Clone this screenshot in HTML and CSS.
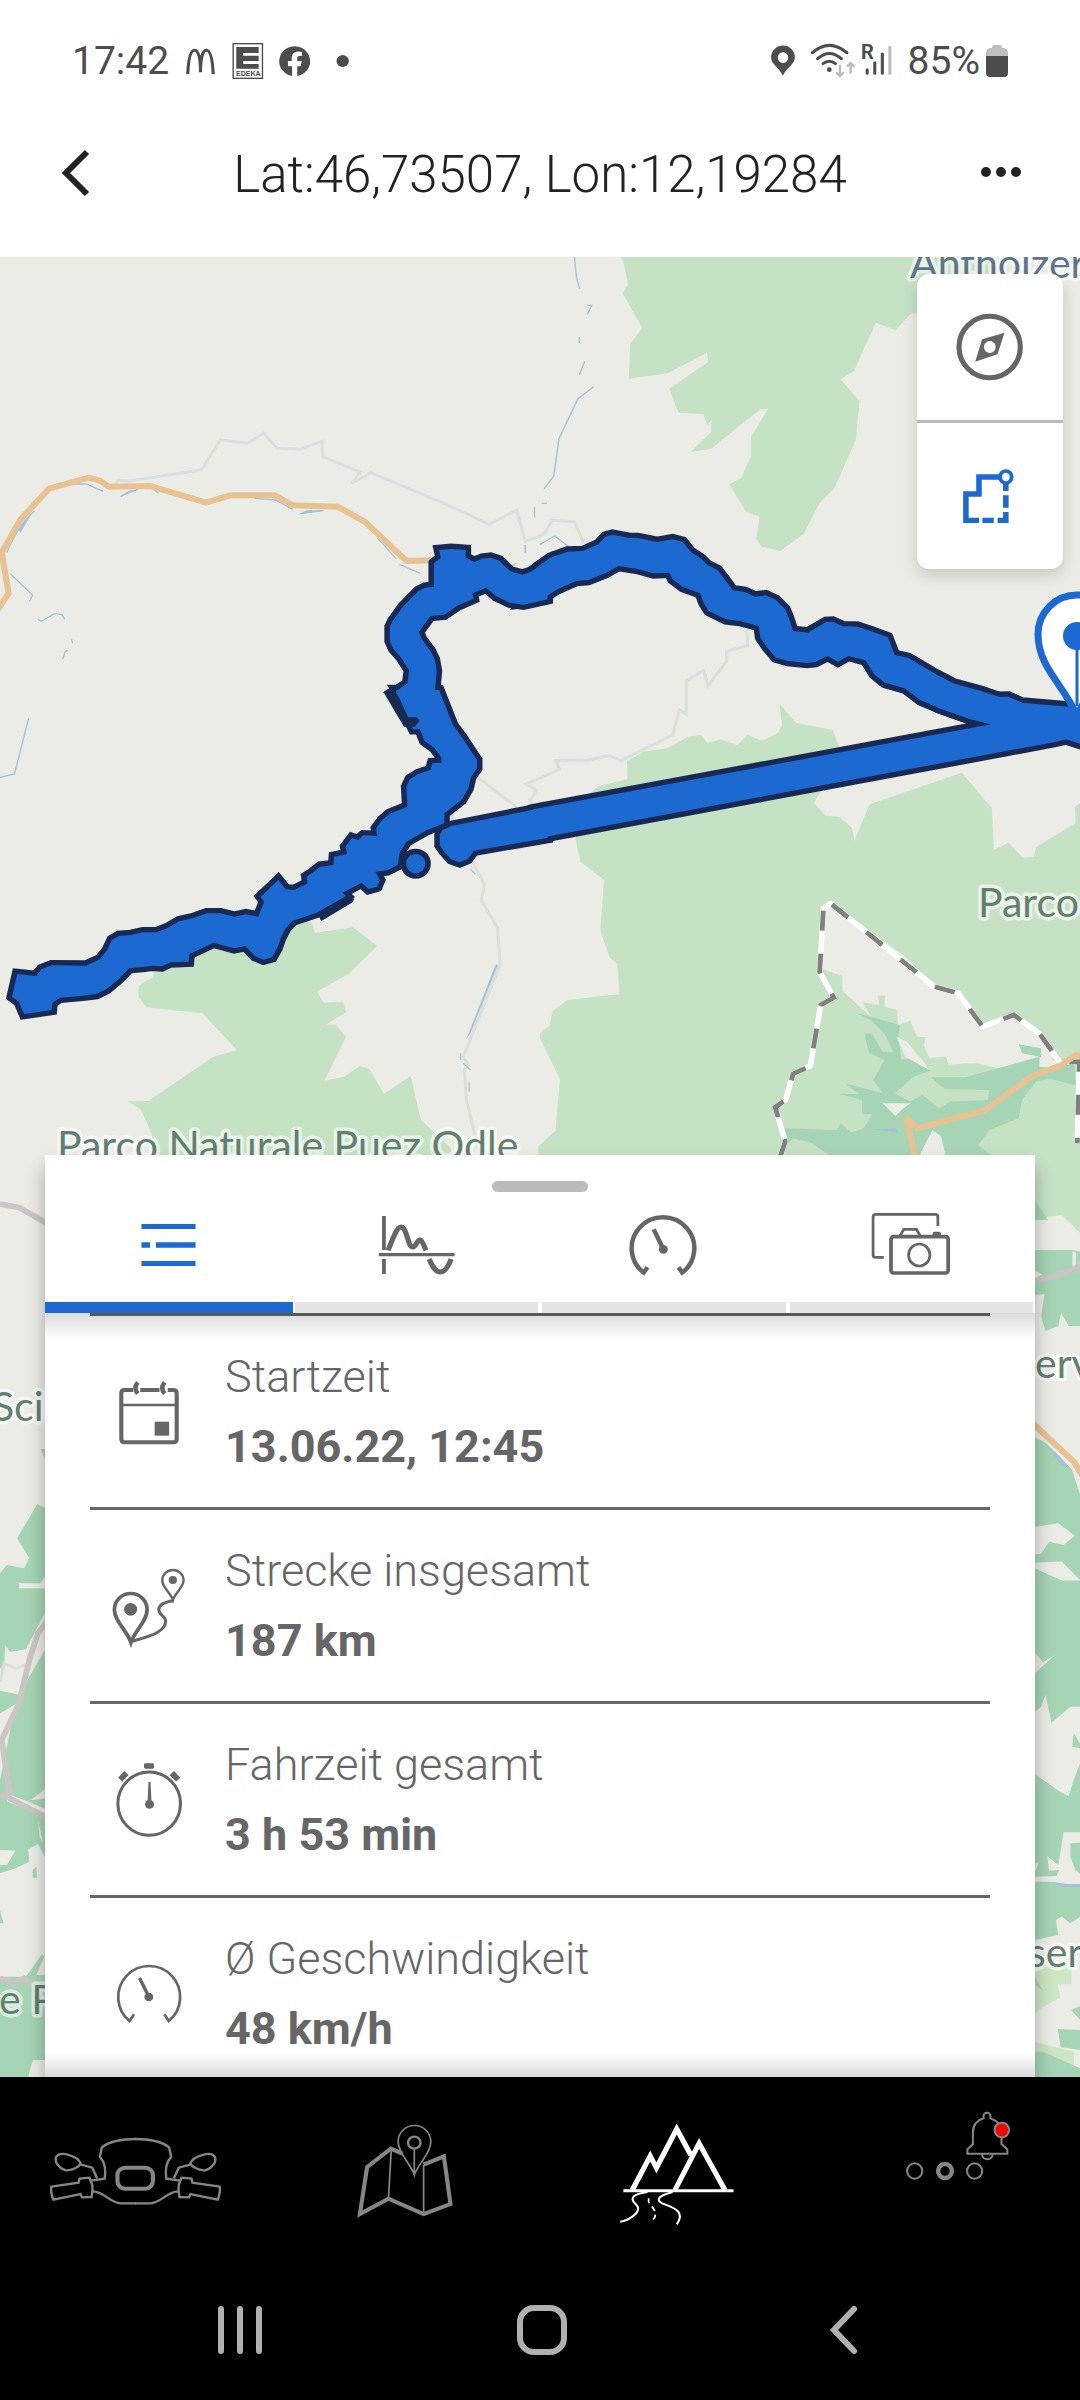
FILE: index.html
```html
<!DOCTYPE html>
<html lang="de">
<head>
<meta charset="utf-8">
<meta name="viewport" content="width=device-width, initial-scale=1">
<title>Tour</title>
<link rel="stylesheet" href="styles.css">
</head>
<body>
<div class="status">
  <span class="status-text">17:42</span>
  <svg class="status-left" viewBox="179 31 176 60" aria-hidden="true">
    <g transform="scale(.3444 .3333)" fill="#4d4d4d">
      <path d="M548 222C550 180 555 151 567 151C580 151 585 180 585 217C585 180 590 151 602 151C615 151 620 180 622 222" fill="none" stroke="#4d4d4d" stroke-width="9"/>
      <rect x="680" y="131" width="85" height="104" fill="none" stroke="#4d4d4d" stroke-width="4"/>
      <path d="M689 141H754V159H709V167H754V183H709V192H754V206H689Z"/>
      <path fill-rule="evenodd" d="M851 228A45 45 0 1 1 866 228V199H876L879 183H866V175Q866 168 874 168H880V156Q850 150 850 174V183H839V199H851Z"/>
      <ellipse cx="998" cy="183" rx="18" ry="18"/>
    </g>
    <text class="tiny" x="237" y="76">EDEKA</text>
  </svg>
  <svg class="status-right" viewBox="771 31 123 60" aria-hidden="true">
    <g transform="translate(540 0) scale(.3444 .3333)" fill="#4d4d4d">
      <path fill-rule="evenodd" d="M705 227C694 203 671 193 671 172A34 35 0 0 1 740 172C740 193 717 203 705 227ZM705 157A15 16 0 1 0 706 157Z"/>
      <g fill="none" stroke="#4d4d4d" stroke-width="9" stroke-linecap="round">
        <path d="M791 158Q840 114 891 158M806 176Q840 145 875 176M822 191Q840 177 858 191"/>
        <path d="M950 209V220M972 188V220M994 162V220"/>
        <path d="M1016 142V220" stroke="#bcbcbc"/>
        <path d="M871 198V227M862 219L871 228L880 219M902 218V189M893 198L902 189L911 198" stroke="#bcbcbc" stroke-width="7"/>
      </g>
      <circle cx="840" cy="209" r="7"/>
    </g>
    <text class="roam" x="861" y="59">R</text>
  </svg>
  <span class="status-text">85%</span>
  <svg class="battery" viewBox="0 0 22 32" aria-hidden="true">
    <path d="M6 3Q6 0 8 0H14Q16 0 16 3H18Q22 4 22 8V12H0V8Q0 4 4 3Z" fill="#bfbfbf"/>
    <path d="M0 11H22V28Q22 32 18 32H4Q0 32 0 28Z" fill="#4d4d4d"/>
  </svg>
</div>

<header class="topbar">
  <button class="icon-btn" aria-label="Zurück"><svg viewBox="0 0 150 100"><path d="M87 27L66 48L87 69" fill="none" stroke="#222" stroke-width="6"/></svg></button>
  <h1>Lat:46,73507, Lon:12,19284</h1>
  <button class="icon-btn" aria-label="Mehr"><svg viewBox="0 0 150 100" fill="#222"><circle cx="56" cy="47" r="5"/><circle cx="71" cy="47" r="5"/><circle cx="86" cy="47" r="5"/></svg></button>
</header>

<main class="map">
  <svg class="map-canvas" viewBox="0 257 1080 1820" preserveAspectRatio="xMidYMin slice" role="img" aria-label="Karte">
    <!-- north east woods -->
    <g transform="translate(540 256) scale(.3444 .3333)">
      <path class="wood" d="M230 0L242 15L256 85L240 112L297 215L262 265L258 368L370 352L485 290L488 318L375 398L402 470L475 475L485 507L497 493V528L438 587L495 580L640 459H662L613 543V600L585 665L550 685L598 767L638 782L628 848L643 872L698 885L765 835L812 740L855 695L917 552L928 436L873 370L912 345L975 200L1033 223L1075 175L1120 165L1300 60L1330 0Z"/>
      <path class="water" d="M100 3L106 65L115 98M137 148H150L138 175M114 243V262M130 316L114 356M156 392L110 428L55 548L40 660L12 698M5 742H20M0 865L43 840L83 872"/>
      <path class="lane" d="M0 840L12 835L35 792L100 798L127 862M425 1370V1275L475 1243L488 1290L542 1215V1187L603 1168L600 1120"/>
    </g>
    <!-- north west roads -->
    <g transform="translate(0 256) scale(.3444 .3333)">
      <path class="lane" d="M335 680L345 673L375 675L585 642L640 552L718 562L765 532L805 577L872 580L935 556L937 602L1045 648L1022 682L1077 650L1290 742L1420 805L1500 763L1525 855L1570 840"/>
      <path class="water" d="M20 890Q50 810 100 765M208 684H250L300 706M440 695L460 712M350 722L375 708L400 700M740 727L800 732L850 760M870 773L940 764M1095 845L1150 908M1160 925L1220 952M30 953L95 1018L85 1037M110 1090L120 1096L158 1073L180 1076L188 1090M208 1150L211 1162M182 1210L190 1186L197 1184M1552 785V752M1525 867V890M1485 930L1500 922"/>
      <path class="water-fill" d="M350 722L375 704L405 700ZM868 775L890 763L943 763ZM50 820L75 790L95 767L60 830Z"/>
      <path class="road" d="M-10 1066L25 1012L5 890L60 790L142 698L257 665L290 674L315 692L435 690L598 740L668 718H798L850 748L980 752L1060 798L1180 915L1270 912"/>
    </g>
    <!-- Puez Odle -->
    <g transform="translate(0 700) scale(.3444 .3333)">
      <path class="wood" d="M905 668L915 698L1025 682L1095 738L1015 820L920 875L940 908L997 905L1005 937L947 974H975L1005 1010L942 1142L1000 1130L1045 1097L1073 1108L1115 1182L1192 1127L1222 1260L1310 1345V1400H465L440 1300L408 1228L370 1203H430L620 1070L688 1050L588 940L425 922L402 890V858L445 830L450 790L600 720L850 660Z"/>
      <path class="lane" d="M1385 230L1500 322M1375 490L1407 555L1397 600L1445 685L1452 795L1345 1070L1360 1095L1348 1110L1355 1205L1392 1360M1570 233L1528 252L1558 272L1540 300L1548 320M1300 330L1320 360"/>
      <path class="water" d="M83 55L42 222L0 232M1366 507L1380 522M1337 1060V1080M1345 1090L1366 1110M1362 1147V1175M1415 1358L1425 1366"/>
      <path class="water-fill" d="M1440 792L1446 795L1366 1000L1353 1020Z"/>
    </g>
    <!-- Fanes and the Cortina side -->
    <g transform="translate(540 700) scale(.3444 .3333)">
      <path class="wood" d="M145 280L170 258L253 238V183L300 155L370 145L430 110L468 105L487 129L525 118L573 135L603 105L645 122L690 100L703 75L695 10L742 68L850 90L868 138V210L812 280L795 308L828 347L868 350L906 383L913 423L957 313L1225 218L1312 325L1318 450L1360 428L1402 473L1432 470L1442 440L1555 370L1553 320L1570 308V1620H1400L700 1400H-5V1340L45 1292L58 1138L0 1015V1000L28 977L37 932L80 900L230 882L225 793L202 772L175 690L186 540L117 485L103 415Z"/>
      <path class="land" d="M823 625L843 608L1055 765L1145 860L1215 880L1285 980L1375 945L1450 1000L1510 1085L1545 1110L1520 1130L1450 1075L1330 1105L1235 1090L1185 1095L1178 1070L1130 1075L1115 1035L1120 1012L1095 1010L1075 962L1040 975L1037 930L1000 920L1003 887H980L985 915L935 907L965 955L878 872V828L812 805Z"/>
      <path class="wood" d="M1110 1033L1130 1075L1178 1070L1187 1095L1270 1090L1330 1105L1230 1137L1140 1120Z"/>
      <path class="forest" d="M920 940L960 950L1045 975L1040 1010L1050 1080L1095 1070L1132 1112L1085 1130L1030 1180L1075 1205L1110 1185L1160 1225L1190 1205L1300 1200L1305 1170L1175 1168L1135 1132H1235L1330 1105L1450 1070L1400 1060L1390 1033L1455 1045V1080L1550 1075L1555 1155L1530 1150L1480 1135L1440 1145L1400 1200L1390 1255L1305 1290L1273 1335L1310 1365L1400 1400H900L840 1365L790 1330L735 1315L705 1345L710 1285L860 1290L873 1270L905 1298L940 1285L965 1243H935V1200L870 1182H925L885 1150L995 1180L968 1140L1000 1080L955 1060L942 1000L965 1003L995 1055L1025 1055L1000 1000L960 960Z"/>
      <path class="land" d="M1035 1010L1065 1025L1110 1080L1130 1110L1060 1070ZM995 1210H1077L1055 1225L1032 1248ZM1100 1370L1140 1290L1165 1310L1178 1370ZM1450 1070L1515 1085L1500 1105L1450 1100Z"/>
      <path class="water-fill" d="M965 1288L1030 1285L1042 1297Z"/>
      <path class="lane" d="M0 235L57 207L45 182L140 180L200 167L235 182L385 105L405 30L425 42V-20"/>
      <path class="border-base" d="M696 1375L712 1325L683 1222L713 1200L735 1122L785 1098L815 915L853 893L812 815L823 625L843 610L1145 860L1215 880L1285 980L1375 945L1450 1000L1510 1088L1566 1085L1560 1330"/>
      <path class="border-dash" d="M696 1375L712 1325L683 1222L713 1200L735 1122L785 1098L815 915L853 893L812 815L823 625L843 610"/>
      <path class="border-dash" d="M848 614L1145 860L1215 880L1285 980L1375 945L1450 1000L1510 1088L1566 1085L1560 1330"/>
      <path class="road" d="M1090 1380L1065 1255L1095 1285L1290 1232L1430 1128L1515 1095L1555 1065L1575 1068"/>
    </g>
    <!-- western edge -->
    <g transform="translate(0 1140) scale(.3444 .3333)">
      <path class="forest" d="M108 1092L50 1195L85 1255L70 1285L20 1275L0 1300V2850H160V1120ZM118 927H140V980Z"/>
      <path class="land" d="M55 1328L110 1340L131 1310V1345H55Z"/>
    </g>
    <g transform="translate(0 1580) scale(.3444 .3333)">
      <path class="land" d="M15 195L30 215L75 208L130 100V210L85 290L60 345L0 332V265L12 260ZM50 370L40 400L0 600V400ZM90 660L140 620V655ZM20 640L140 690V712L20 665ZM110 720L125 790L115 770ZM0 880L45 865L85 845L82 808L110 792L140 850V1130L120 1125L75 1190H0ZM0 810L45 812L20 855H0ZM105 1185L131 1125V1185ZM131 1440H95L80 1500H131ZM50 10H131V25Z"/>
      <path class="forest" d="M95 870L105 860L108 893H95ZM0 990L10 1030H0Z"/>
      <path class="lane" d="M0 305L12 250L45 265L75 255"/>
      <path class="street" d="M140 120L110 160L85 240L55 370L5 480L28 640L0 650M20 650L140 715M0 1195L40 1210L70 1195L131 1240M0 -1128L55 -1118L140 -1068"/>
    </g>
    <!-- eastern edge -->
    <g transform="translate(540 1140) scale(.3444 .3333)">
      <path class="land" d="M1400 240L1515 225L1570 280V2850H1400Z"/>
      <path class="forest" d="M1400 140L1437 180L1475 240H1400ZM1400 330H1545L1570 335V558H1535L1513 520L1505 558L1468 573L1455 530L1465 462L1400 470ZM1400 893H1440L1470 910L1545 990L1570 1070V2330L1540 2350L1515 2330L1498 2340L1505 2385L1437 2400H1400Z"/>
      <path class="land" d="M1437 1160L1505 1150L1553 1187L1520 1215L1478 1205L1455 1242H1437ZM1437 1268L1515 1265L1570 1322H1515L1437 1285ZM1546 335H1556V380H1546ZM1437 392L1458 403L1437 418Z"/>
      <path class="street" d="M1420 430L1500 405L1550 390L1575 365"/>
      <path class="water-fill" d="M1465 910L1505 945L1545 990L1515 975Z"/>
      <path class="road" d="M1420 840L1550 965L1580 1015"/>
    </g>
    <g transform="translate(540 1580) scale(.3444 .3333)">
      <path class="land" d="M1437 218L1460 247L1495 225L1437 280ZM1437 395L1455 380L1468 345L1485 428L1540 380H1570V545L1553 590L1535 648L1510 635L1437 582ZM1437 890L1500 888L1508 870L1478 872L1473 828L1505 855L1520 757H1570V788L1540 790V830L1555 870L1570 885V918L1530 918L1490 906L1437 905ZM1437 850H1448L1437 875Z"/>
      <path class="meadow" d="M1430 1180L1543 1130V1213H1503L1510 1253L1455 1285L1430 1310ZM1430 1385L1550 1415V1455L1460 1415H1430Z"/>
      <path class="forest" d="M1545 500L1550 460L1570 495V505ZM1570 1278L1542 1290L1570 1322ZM1503 1347L1570 1350V1410L1512 1402ZM1430 1415H1460L1570 1465V1500H1430ZM1437 1190L1461 1233L1437 1215Z"/>
      <path class="water-fill" d="M1488 906L1530 912H1570V921H1520Z"/>
    </g>

    <g class="labels">
      <text x="910" y="278" class="label-lake">Antholzer See</text>
      <text x="978" y="917">Parco</text>
      <text x="57" y="1160">Parco Naturale Puez Odle</text>
      <text x="-8" y="1421">Sciliar</text>
      <text x="1035" y="1378">erva</text>
      <text x="-1" y="2014">e Parco</text>
      <text x="1028" y="1967">serva</text>
    </g>

    <!-- recorded track: dark casing first, blue fill above it -->
    <defs>
      <g id="track">
        <path transform="translate(0 256) scale(.3444 .3333)" d="M1590 915L1540 948L1517 956L1482 946L1450 914L1425 905L1400 908L1378 918L1352 905V882L1310 879L1275 882L1280 905L1260 922V992L1235 995L1215 1005L1170 1052L1140 1095L1132 1112V1155L1142 1178L1165 1205L1188 1243L1183 1282L1147 1308L1168 1352L1200 1420H1300L1284 1340L1263 1302L1268 1245L1262 1210L1250 1185L1225 1150L1216 1128L1250 1080L1290 1076L1330 1048L1375 1028L1372 1012L1412 995L1440 1020L1480 1040L1520 1046L1590 1030Z"/>
        <path transform="translate(540 256) scale(.3444 .3333)" d="M-10 935L30 905L80 887L125 885L170 864L190 842L210 836L260 846H285L340 858L385 850L415 858L438 888L470 910L485 926L515 942L535 968L560 1003L595 1008L625 1022L655 1018L685 1032L712 1060L722 1085L735 1125L778 1130L830 1098L850 1097L880 1111L920 1112L960 1125L1010 1144L1030 1197L1070 1206L1150 1255L1200 1282L1280 1305L1330 1322L1375 1342L1430 1352L1580 1358V1440L1310 1405L1245 1388L1160 1357L1105 1333L1060 1298L1000 1280L970 1255L945 1213L895 1200L865 1217L835 1200L800 1218L775 1221L720 1215L685 1205L660 1175L640 1145L635 1110L580 1095L540 1090L490 1065L475 1040L465 1012L415 993L385 970L375 950L330 952L280 938L228 930L190 952L140 972L105 975L50 1000L0 1033L-60 1042Z"/>
        <path transform="translate(540 700) scale(.3444 .3333)" d="M-20 328L1310 73L1245 56L1160 25L1100 -5L1360 -10L1400 8L1535 20L1600 24V142L1527 118L1500 125L-20 418Z"/>
        <path transform="translate(0 700) scale(.3444 .3333)" d="M1590 321L1310 378L1285 390L1277 405V435L1290 455L1310 478L1335 487L1358 477L1376 452L1590 414Z"/>
        <ellipse transform="translate(0 700) scale(.3444 .3333)" cx="1207" cy="491" rx="28" ry="29"/>
        <path transform="translate(0 700) scale(.3444 .3333)" d="M1150 -30L1195 55L1213 58L1220 90L1232 122L1262 145L1281 172L1282 188L1255 190L1250 210L1215 222L1190 238L1180 260L1183 320L1130 342L1110 360L1092 385L1095 408L1055 406L1040 420L1022 414L1003 440L1008 462L970 470L968 495L930 500L905 520L890 530L893 550L855 570L830 568L808 540L757 590L767 605L750 650L715 643L680 650L640 640H600L560 655L520 664L485 685L455 697L415 697L380 705L345 708L325 720L310 752L290 778L250 797L150 796L120 808L105 828L50 822L35 890L55 905L70 942L150 930L152 908L175 893L240 887L280 882L310 867L345 837L375 805L420 800L440 797L470 799L495 787L548 785L550 762L620 728L680 745L712 738L740 768L765 779L790 772L805 745L815 715L830 685L850 662L920 638L1005 588L995 578L1050 548L1070 567L1095 560L1103 540L1090 515L1125 511L1155 495L1160 460L1180 425L1240 390L1290 370V340L1340 300L1360 265L1368 230L1385 205V180L1340 110L1315 75L1275 -30Z"/>
      </g>
    </defs>
    <use href="#track" class="track-casing"/>
    <use href="#track" class="track-fill"/>
    <path class="casing-patch" transform="translate(0 700) scale(.3444 .3333)" d="M1113 -24L1147 -46L1148 -28L1163 2L1185 52H1210L1218 62L1205 80H1173ZM925 645L1005 595H1028L1025 606L932 664Z"/>
    <!-- destination pin -->
    <path d="M1077 716C1065 686 1038 668 1038 634A39 39 0 0 1 1116 634C1116 668 1089 686 1077 716Z" fill="#fff" stroke="#1d69d2" stroke-width="7"/>
    <circle cx="1077" cy="636" r="14" fill="#1d69d2"/>
    <path d="M1077 636V706" stroke="#1d69d2" stroke-width="3"/>
  </svg>

  <div class="controls">
    <button aria-label="Kompass"><svg viewBox="1095 54 424 438" preserveAspectRatio="none"><ellipse cx="1306" cy="273" rx="89" ry="92" fill="none" stroke="#666" stroke-width="15"/><path fill="#666" fill-rule="evenodd" d="M1349 230L1329 295L1264 317L1284 250ZM1306 255A17 18 0 1 0 1307 255Z"/></svg></button>
    <button aria-label="Route anzeigen"><svg viewBox="1095 501 424 438" preserveAspectRatio="none" fill="none" stroke="#1d69d2" stroke-width="16"><path d="M1335 663H1275V714H1237V793H1275M1285 793H1318M1329 793H1353V768M1353 755V718M1353 705V683"/><ellipse cx="1353" cy="663" rx="17" ry="18" stroke-width="11"/></svg></button>
  </div>

  <section class="sheet">
    <div class="sheet-head">
      <div class="handle"></div>
      <nav class="tabs">
        <button class="tab active" aria-label="Details"><svg viewBox="131 156 717 330" preserveAspectRatio="none" fill="#1d69d2"><path d="M411 252H568V267H411ZM411 307H436V323H411ZM453 307H568V323H453ZM411 363H568V378H411Z"/></svg></button>
        <button class="tab" aria-label="Verlauf"><svg viewBox="848 156 717 330" preserveAspectRatio="none" fill="none" stroke="#666" stroke-width="15"><path d="M1112 228V330M1112 357V402" stroke-width="11"/><path d="M1097 344H1317" stroke-width="10"/><path d="M1124 331C1140 290 1150 260 1162 261C1180 263 1180 321 1196 321C1205 321 1208 299 1217 300C1224 302 1228 318 1234 331M1243 357C1255 385 1263 396 1275 396S1297 385 1307 357"/></svg></button>
        <button class="tab" aria-label="Geschwindigkeit"><svg viewBox="0 156 717 330" preserveAspectRatio="none" fill="none" stroke="#666" stroke-width="13"><path d="M312 382L301 398A91 93 0 1 1 413 398L402 382"/><path d="M330 268L358 327"/><circle cx="358" cy="328" r="13" fill="#666" stroke="none"/></svg></button>
        <button class="tab" aria-label="Fotos"><svg viewBox="719 156 717 330" preserveAspectRatio="none" fill="none" stroke="#666" stroke-width="8"><path d="M997 352H973Q966 352 966 345V231Q966 223 974 223H1147Q1154 223 1154 231V258M1044 288L1055 268H1092L1103 288"/><rect x="1018" y="290" width="166" height="109" rx="8" stroke-width="11"/><ellipse cx="1100" cy="345" rx="31" ry="33"/><path d="M1139 287V280Q1139 275 1144 275H1158Q1163 275 1163 280V287Z" fill="#666" stroke="none"/></svg></button>
      </nav>
    </div>
    <dl class="facts">
      <div class="fact">
        <svg viewBox="261 528 343 573" preserveAspectRatio="none" fill="none" stroke="#666" stroke-width="12"><path d="M386 750H362Q352 750 352 760V897Q352 907 362 907H503Q513 907 513 897V760Q513 750 503 750H487M407 750H463"/><path d="M400 727Q386 744 400 761M478 727Q464 744 478 761" stroke-width="13"/><path d="M352 795H513" stroke-width="7"/><rect x="449" y="845" width="42" height="42" fill="#666" stroke="none"/></svg>
        <div><dt>Startzeit</dt><dd>13.06.22, 12:45</dd></div>
      </div>
      <div class="fact">
        <svg viewBox="261 -210 343 573" preserveAspectRatio="none" fill="none" stroke="#666"><path d="M380 187C368 150 332 125 332 89A47 48 0 0 1 427 89C427 125 392 150 380 187Z" stroke-width="11"/><circle cx="379" cy="88" r="19" fill="#666" stroke="none"/><path d="M380 185C420 172 481 160 481 124C481 107 461 106 461 89C461 71 480 65 504 62" stroke-width="9"/><path d="M502 60C495 38 471 22 471 1A31 31 0 0 1 533 1C533 22 509 38 502 60Z" stroke-width="7"/><circle cx="502" cy="0" r="12" fill="#666" stroke="none"/></svg>
        <div><dt>Strecke insgesamt</dt><dd>187 km</dd></div>
      </div>
      <div class="fact">
        <svg viewBox="261 372 343 573" preserveAspectRatio="none" fill="none" stroke="#666"><ellipse cx="433" cy="671" rx="91" ry="95" stroke-width="9"/><rect x="418" y="550" width="29" height="16" rx="4" fill="#666" stroke="none"/><path d="M349 599L367 579M499 579L517 599" stroke-width="17"/><path d="M431 606H437L440 672H428Z" fill="#666" stroke="none"/><circle cx="434" cy="673" r="13" fill="#666" stroke="none"/></svg>
        <div><dt>Fahrzeit gesamt</dt><dd>3 h 53 min</dd></div>
      </div>
      <div class="fact">
        <svg viewBox="261 954 343 573" preserveAspectRatio="none" fill="none" stroke="#666" stroke-width="8"><path d="M389 1303L376 1323A90 93 0 1 1 490 1323L477 1303"/><path d="M405 1194L432 1250" stroke-width="10"/><circle cx="432" cy="1251" r="13" fill="#666" stroke="none"/></svg>
        <div><dt>Ø Geschwindigkeit</dt><dd>48 km/h</dd></div>
      </div>
    </dl>
  </section>
</main>

<nav class="appnav">
  <a href="#" aria-label="Fahrzeug"><svg viewBox="0 21 784 540" preserveAspectRatio="none" fill="none" stroke="#868686" stroke-width="7">
    <g id="bar-half"><path d="M264 332L304 326C308 300 303 275 290 260L296 232C320 212 360 207 395 207M235 281C225 257 172 240 162 263C158 285 185 302 195 301C212 300 230 291 235 279M233 283L268 293L282 325M149 350L228 338L231 326L260 323L268 345C270 360 268 370 266 381L238 382L234 372L155 389C149 375 147 365 149 350ZM268 364C300 362 320 400 350 400H395"/></g>
    <use href="#bar-half" transform="translate(787 0) scale(-1 1)"/>
    <rect x="341" y="293" width="103" height="63" rx="22" stroke-width="12"/></svg></a>
  <a href="#" aria-label="Karte"><svg viewBox="784 21 784 540" preserveAspectRatio="none" fill="none" stroke="#868686" stroke-width="5"><path d="M1168 251L1135 236L1066 291L1045 432L1128 386L1230 432L1308 402L1289 259L1230 284" stroke-width="12"/><path d="M1136 240L1128 386M1230 284V432M1203 238V312M1203 315C1195 285 1156 250 1156 215A47 48 0 0 1 1251 215C1251 250 1212 285 1203 315Z"/><circle cx="1203" cy="218" r="18" stroke-width="7"/></svg></a>
  <a href="#" aria-label="Touren"><svg viewBox="0 21 784 540" preserveAspectRatio="none" fill="none" stroke="#fff" stroke-width="15"><path d="M268 360L320 258L338 294L397 177L438 255M392 360L462 220L537 360"/><path d="M242 362H562" stroke-width="9"/><path d="M312 366C250 375 270 395 280 405C300 425 255 453 233 455M385 366C335 380 340 392 355 400C395 415 422 427 397 463" stroke-width="6"/><path d="M316 385C310 400 330 410 334 425C338 440 330 450 320 453" stroke-width="5" stroke-dasharray="16 11"/></svg></a>
  <a href="#" aria-label="Mehr"><svg viewBox="784 21 784 540" preserveAspectRatio="none" fill="none" stroke="#868686" stroke-width="6"><ellipse cx="1088" cy="303" rx="22" ry="23"/><ellipse cx="1176" cy="303" rx="20" ry="21" stroke-width="13"/><ellipse cx="1262" cy="303" rx="22" ry="23"/><path d="M1340 200V222L1357 238V251H1241V238L1257 222V185C1257 165 1270 150 1288 145V138A10 10 0 0 1 1308 138V145C1320 150 1330 156 1335 165M1284 254C1284 272 1314 272 1314 254"/><ellipse cx="1341" cy="180" rx="21" ry="22" fill="#f00"/></svg></a>
</nav>
<nav class="sysnav">
  <button aria-label="Letzte Apps"><svg viewBox="0 0 60 60"><path d="M11 9V51M30 9V51M49 9V51"/></svg></button>
  <button aria-label="Start"><svg viewBox="0 0 60 60"><rect x="8" y="8" width="44" height="44" rx="14"/></svg></button>
  <button aria-label="Zurück"><svg viewBox="0 0 60 60"><path d="M40 9L20 30L40 51"/></svg></button>
</nav>
</body>
</html>
```
FILE: styles.css
```css
* { box-sizing: border-box; }
body {
  margin: 0;
  height: 100vh;
  min-height: 1600px;
  display: flex;
  flex-direction: column;
  background: #fff;
  color: #222;
  font-family: Roboto, "Liberation Sans", sans-serif;
}
button { border: 0; padding: 0; background: none; font: inherit; }
svg { display: block; }

.status {
  flex: none;
  display: flex;
  align-items: center;
  height: 91px;
  padding: 31px 72px 0 72px;
  color: #4d4d4d;
}
.status-text { font-size: 39px; line-height: 60px; }
.status-left { width: 176px; height: 60px; margin-left: 9px; }
.status-right { width: 123px; height: 60px; margin: 0 14px 0 auto; }
.battery { width: 22px; height: 32px; margin-left: 6px; }
.tiny { font: bold 7px "Liberation Sans", sans-serif; fill: #4d4d4d; }
.roam { font: bold 20px Roboto, sans-serif; fill: #4d4d4d; }

.topbar { flex: none; display: flex; align-items: center; height: 166px; padding-top: 2px; }
.topbar h1 {
  flex: 1;
  margin: 0;
  font-size: 51px;
  line-height: 62px;
  font-weight: 300;
  text-align: center;
  white-space: nowrap;
}
.icon-btn { width: 150px; height: 100px; }
.icon-btn svg { width: 150px; height: 100px; }

.map {
  flex: 1;
  min-height: 0;
  position: relative;
  display: flex;
  flex-direction: column;
  justify-content: space-between;
  background: #ebece5;
  overflow: hidden;
}
.map-canvas { position: absolute; inset: 0; width: 100%; height: 100%; }
.wood { fill: #c6e2c5; }
.meadow { fill: #cde6c4; }
.forest { fill: #a6d5b5; }
.land { fill: #ebece5; }
.water { fill: none; stroke: #a3c0dd; stroke-width: 4; }
.water-fill { fill: #a3c0dd; }
.lane { fill: none; stroke: #dcdedb; stroke-width: 9; }
.street { fill: none; stroke: #cbc6c4; stroke-width: 17; }
.road { fill: none; stroke: #e8c292; stroke-width: 18; stroke-linejoin: round; }
.border-base { fill: none; stroke: #fff; stroke-width: 16; stroke-linejoin: round; }
.border-dash { fill: none; stroke: #808080; stroke-width: 14; stroke-dasharray: 60 69; }
.labels {
  font-family: Lato, "Open Sans", sans-serif;
  font-size: 41px;
  fill: #62806f;
  stroke: rgba(255, 255, 255, .6);
  stroke-width: 7px;
  stroke-linejoin: round;
  paint-order: stroke;
}
.label-lake { fill: #5f7589; }
.track-casing { fill: #182a54; stroke: #182a54; stroke-width: 32; }
.track-fill { fill: #1d69d2; }
.casing-patch { fill: #182a54; }

.controls {
  position: relative;
  align-self: flex-end;
  width: 146px;
  margin: 17px 17px 0 0;
  border-radius: 12px;
  background: #fff;
  box-shadow: 0 6px 16px rgba(0, 0, 0, .16);
}
.controls button { display: block; width: 146px; height: 146px; }
.controls button + button { height: 149px; border-top: 3px solid #bababa; }
.controls svg { width: 146px; height: 146px; }

.sheet {
  position: relative;
  flex: 0 0 922px;
  min-height: 0;
  max-height: 922px;
  display: flex;
  flex-direction: column;
  margin: 0 45px;
  background: #fff;
  box-shadow: 0 12px 18px rgba(0, 0, 0, .3);
}
.sheet::after {
  content: "";
  position: absolute;
  inset: auto 0 0 0;
  height: 24px;
  background: linear-gradient(rgba(0, 0, 0, 0), rgba(0, 0, 0, .14));
}
.sheet-head { flex: none; position: relative; padding-top: 26px; }
.sheet-head::after {
  content: "";
  position: absolute;
  z-index: 1;
  inset: 100% 0 auto 0;
  height: 26px;
  background: linear-gradient(rgba(0, 0, 0, .14), rgba(0, 0, 0, 0));
}
.handle { width: 96px; height: 11px; margin: 0 auto; border-radius: 6px; background: #bababa; }
.tabs { display: flex; }
.tab { flex: 1; min-width: 0; display: flex; flex-direction: column; align-items: center; }
.tab::after { content: ""; align-self: stretch; height: 11px; margin: 0 2px; background: #e5e5e5; }
.tab.active::after { margin: 0; background: #1d69d2; }
.tab svg { flex: none; width: 247px; height: 110px; }

.facts { flex: 1; min-height: 0; margin: 0; padding: 0 45px; overflow: hidden; color: #666; }
.fact { display: flex; align-items: center; gap: 17px; height: 194px; border-top: 3px solid #666; }
.fact svg { flex: none; width: 118px; height: 191px; }
.fact dt, .fact dd { margin: 0; font-size: 45px; line-height: 70px; white-space: nowrap; }
.fact dt { font-weight: 300; }
.fact dd { font-weight: 700; }

.appnav { flex: none; display: flex; background: #000; }
.appnav a { flex: 1; display: flex; justify-content: center; }
.appnav svg { width: 270px; height: 180px; }
.sysnav { flex: none; display: flex; align-items: center; height: 143px; padding: 3px 85px 0 89px; background: #000; }
.sysnav button { flex: 1; display: flex; justify-content: center; }
.sysnav svg { width: 60px; height: 60px; fill: none; stroke: #b0b0b0; stroke-width: 6; stroke-linecap: round; }
```
